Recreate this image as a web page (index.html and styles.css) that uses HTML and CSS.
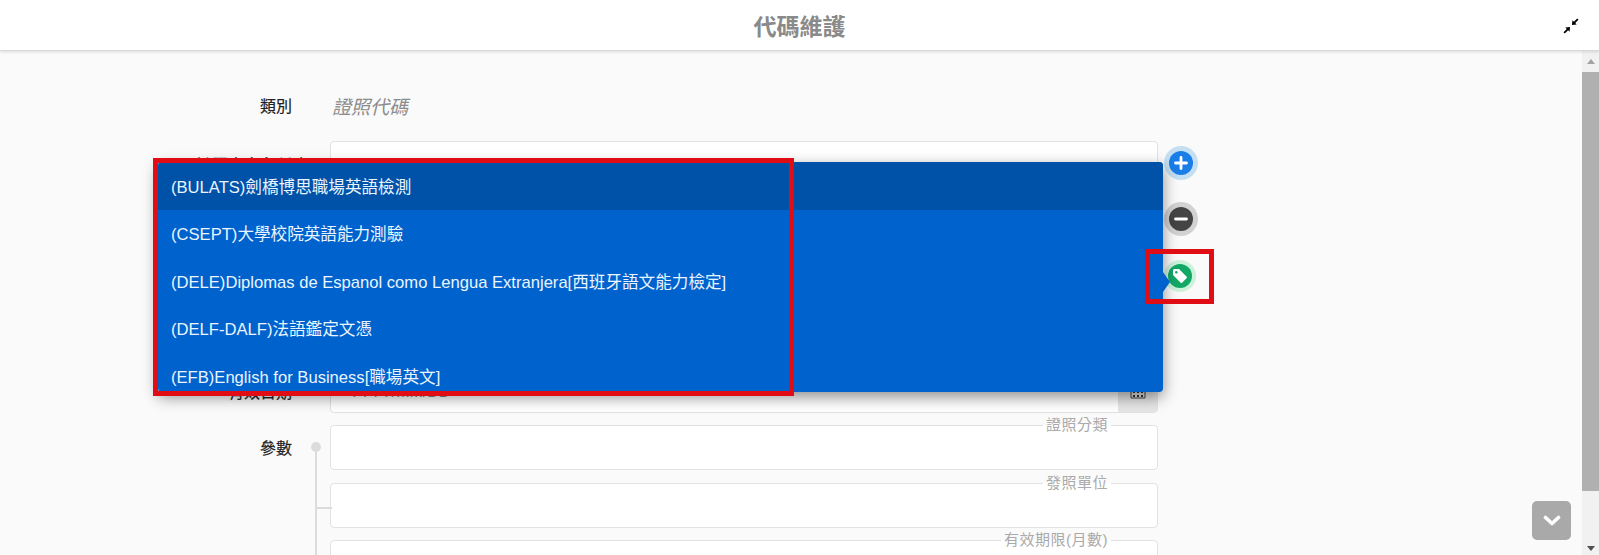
FILE: index.html
```html
<!DOCTYPE html>
<html lang="zh-Hant">
<head>
<meta charset="utf-8">
<title>代碼維護</title>
<link rel="stylesheet" href="styles.css">
</head>
<body>
<header class="topbar">
  <h1 class="title">代碼維護</h1>
  <button class="compress" aria-label="縮小">
    <svg width="16" height="16" viewBox="0 0 16 16"><path d="M15.500 1.800 14.200.5 10.900 3.800 9.400 2.300 9 7l4.700-.4-1.500-1.500zM.5 14.200 1.800 15.500 5.100 12.200 6.600 13.700 7 9l-4.700.4 1.500 1.500z" fill="#000"/></svg>
  </button>
</header>
<div class="body">
  <main class="main">
    <form class="form">
      <div class="row row-static">
        <span class="label">類別</span>
        <span class="static">證照代碼</span>
      </div>
      <div class="rows">
        <div class="row"><span class="label req">證照中文名稱</span><div class="field"></div></div>
        <div class="row"><span></span><div class="field"></div></div>
        <div class="row"><span></span><div class="field"></div></div>
        <div class="row"><span></span><div class="field"></div></div>
        <div class="row"><span class="label">有效日期</span>
          <div class="field date"><span class="placeholder">YYYY/MM/DD</span>
            <span class="addon"><svg width="16" height="14" viewBox="0 0 16 14"><path d="M1 1h14v12H1z" fill="#e4e4e4" stroke="#444"/><path d="M1 1h14v3H1z" fill="#444"/><path d="M3 6h2v2H3zM7 6h2v2H7zM11 6h2v2h-2zM3 10h2v2H3zM7 10h2v2H7zM11 10h2v2h-2z" fill="#333"/></svg></span>
          </div>
        </div>
      </div>
      <div class="params">
        <div class="row"><span class="label param-label">參數</span><div class="field legend-field"><span class="legend">證照分類</span></div></div>
        <div class="row"><span></span><div class="field legend-field"><span class="legend">發照單位</span></div></div>
        <div class="row"><span></span><div class="field legend-field"><span class="legend">有效期限(月數)</span></div></div>
      </div>
    </form>

    <button class="fab fab-add" aria-label="新增">
      <svg width="14" height="14" viewBox="0 0 14 14"><path d="M7 1.500v11M1.500 7h11" stroke="#fff" stroke-width="2.800" stroke-linecap="round"/></svg>
    </button>
    <button class="fab fab-remove" aria-label="移除">
      <svg width="14" height="14" viewBox="0 0 14 14"><path d="M1.500 7h11" stroke="#fff" stroke-width="2.800" stroke-linecap="round"/></svg>
    </button>
    <button class="fab fab-tag" aria-label="標籤">
      <svg width="16" height="16" viewBox="0 0 16 16"><path d="M1 2.500C1 1.700 1.700 1 2.500 1H7l7.700 7.700c.4.4.4 1 0 1.400l-4.600 4.600c-.4.4-1 .4-1.400 0L1 7z" fill="#fff"/><circle cx="4.300" cy="4.300" r="1.200" fill="#12a866"/></svg>
    </button>

    <div class="dropdown">
      <ul class="options">
        <li class="option active">(BULATS)劍橋博思職場英語檢測</li>
        <li class="option">(CSEPT)大學校院英語能力測驗</li>
        <li class="option">(DELE)Diplomas de Espanol como Lengua Extranjera[西班牙語文能力檢定]</li>
        <li class="option">(DELF-DALF)法語鑑定文憑</li>
        <li class="option">(EFB)English for Business[職場英文]</li>
      </ul>
      <span class="caret"></span>
    </div>

    <div class="mark mark-list"></div>
    <div class="mark mark-tag"></div>

    <button class="to-bottom" aria-label="到底部">
      <svg width="18" height="12" viewBox="0 0 18 12"><path d="M2.500 2.500 9 8.500l6.500-6" fill="none" stroke="#fff" stroke-width="3.600" stroke-linecap="round" stroke-linejoin="round"/></svg>
    </button>
  </main>
  <aside class="scrollbar">
    <span class="arrow-up"></span>
    <span class="thumb"></span>
    <span class="arrow-down"></span>
  </aside>
</div>
</body>
</html>
```
FILE: styles.css
```css
* { box-sizing: border-box; }
html, body { margin: 0; height: 100%; overflow: hidden; }
body {
  display: flex;
  flex-direction: column;
  background: #fafafa;
  color: #222;
  font-family: "Liberation Sans", "Noto Sans CJK TC", sans-serif;
  font-size: 16px;
}
.topbar {
  position: relative;
  z-index: 2;
  flex: none;
  height: 51px;
  display: flex;
  align-items: center;
  justify-content: center;
  background: #fff;
  border-bottom: 1px solid #d8d8d8;
  box-shadow: 0 1px 3px rgba(0,0,0,.12);
}
.title {
  margin: 0 0 -5px;
  font-size: 23px;
  font-weight: 700;
  color: #8a8a8a;
  line-height: 1;
}
.compress {
  position: absolute;
  right: 20px;
  top: 18px;
  display: block;
  padding: 0;
  border: 0;
  background: none;
  line-height: 0;
}
.body { flex: 1; min-height: 0; display: flex; }
.main { position: relative; flex: 1; overflow: hidden; }

.form { padding-top: 35px; }
.row {
  display: grid;
  grid-template-columns: 292px 828px;
  column-gap: 38px;
  align-items: center;
}
.row-static { height: 38px; margin-bottom: 17px; }
.label { text-align: right; color: #222; font-weight: 400; -webkit-text-stroke: .2px #222; }
.param-label { margin-top: -2px; }
.req { position: relative; }
.req::after { content: "*"; position: absolute; left: 100%; top: 3px; margin-left: 6px; }
.static {
  margin-left: 2px;
  font-size: 19px;
  font-style: italic;
  color: #8c8c8c;
}
.rows { display: grid; row-gap: 12px; margin-bottom: 12px; }
.field {
  position: relative;
  height: 45px;
  background: #fff;
  border: 1px solid #e2e2e2;
  border-radius: 4px;
}
.date {
  height: 44px;
  display: flex;
  align-items: center;
  justify-content: space-between;
  padding: 1px 0 0 18px;
  overflow: hidden;
}
.placeholder { color: #808080; font-size: 16px; }
.addon {
  align-self: stretch;
  width: 39px;
  margin-top: -1px;
  display: flex;
  align-items: flex-end;
  justify-content: center;
  padding-bottom: 13px;
  background: #e6e6e6;
}
.params {
  position: relative;
  display: grid;
  row-gap: 12.500px;
}
.params::before {
  content: "";
  position: absolute;
  left: 311px;
  top: 17px;
  width: 10px;
  height: 10px;
  border-radius: 50%;
  background: #dcdcdc;
}
.params::after {
  content: "";
  position: absolute;
  left: 315px;
  top: 22px;
  width: 15px;
  height: 60px;
  border-left: 2px solid #dcdcdc;
  border-bottom: 2px solid #dcdcdc;
}
.params .row:last-child::before {
  content: "";
  position: absolute;
  left: 315px;
  top: 80px;
  bottom: -40px;
  width: 2px;
  background: #dcdcdc;
}
.legend {
  position: absolute;
  right: 46px;
  top: -10px;
  padding: 0 3px;
  background: linear-gradient(#fafafa 50%, #fff 50%);
  color: #aaa;
  font-size: 15px;
  line-height: 18px;
  letter-spacing: .5px;
}

.fab {
  position: absolute;
  width: 24px;
  height: 24px;
  padding: 0;
  border: 0;
  border-radius: 50%;
  display: flex;
  align-items: center;
  justify-content: center;
}
.fab-add { left: 1169px; top: 100px; background: #1a7ee8; box-shadow: 0 0 0 5px #c4dff2; }
.fab-remove { left: 1169px; top: 156px; background: #444; box-shadow: 0 0 0 5px #d2d2d2; }
.fab-tag { left: 1168px; top: 213px; background: #12a866; box-shadow: 0 0 0 4px #cdf2dc; }

.dropdown {
  position: absolute;
  left: 158px;
  top: 111px;
  width: 1005px;
  height: 230px;
  background: #0062cc;
  border-radius: 4px;
  box-shadow: 0 5px 15px rgba(0,0,0,.45);
}
.options {
  margin: 0;
  padding: 0;
  height: 100%;
  overflow: hidden;
  list-style: none;
  border-radius: 4px;
}
.option {
  height: 47.500px;
  display: flex;
  align-items: center;
  padding-left: 13px;
  color: #eaf5ff;
  font-size: 16.600px;
}
.active { background: #0052a8; }
.caret {
  position: absolute;
  left: 100%;
  top: 110px;
  border-left: 7px solid #0062cc;
  border-top: 10px solid transparent;
  border-bottom: 10px solid transparent;
}

.mark { position: absolute; border: 5px solid #e00d14; pointer-events: none; }
.mark-list { left: 153px; top: 107px; width: 641px; height: 238px; }
.mark-tag { left: 1145px; top: 198px; width: 69px; height: 55px; }

.to-bottom {
  position: absolute;
  left: 1532px;
  top: 450px;
  width: 39px;
  height: 39px;
  padding: 0;
  border: 0;
  border-radius: 5px;
  background: #a9a9a9;
  display: flex;
  align-items: center;
  justify-content: center;
}

.scrollbar {
  flex: none;
  width: 17px;
  display: flex;
  flex-direction: column;
  align-items: center;
  background: #f1f1f1;
  padding: 7px 0 4px;
}
.thumb { flex: 1; width: 100%; margin: 8px 0 55px; background: #b0b0b0; }
.arrow-up, .arrow-down { width: 0; height: 0; border-left: 4px solid transparent; border-right: 4px solid transparent; }
.arrow-up { border-bottom: 5px solid #a3a3a3; margin-top: 1px; }
.arrow-down { border-top: 5px solid #505050; }
```
